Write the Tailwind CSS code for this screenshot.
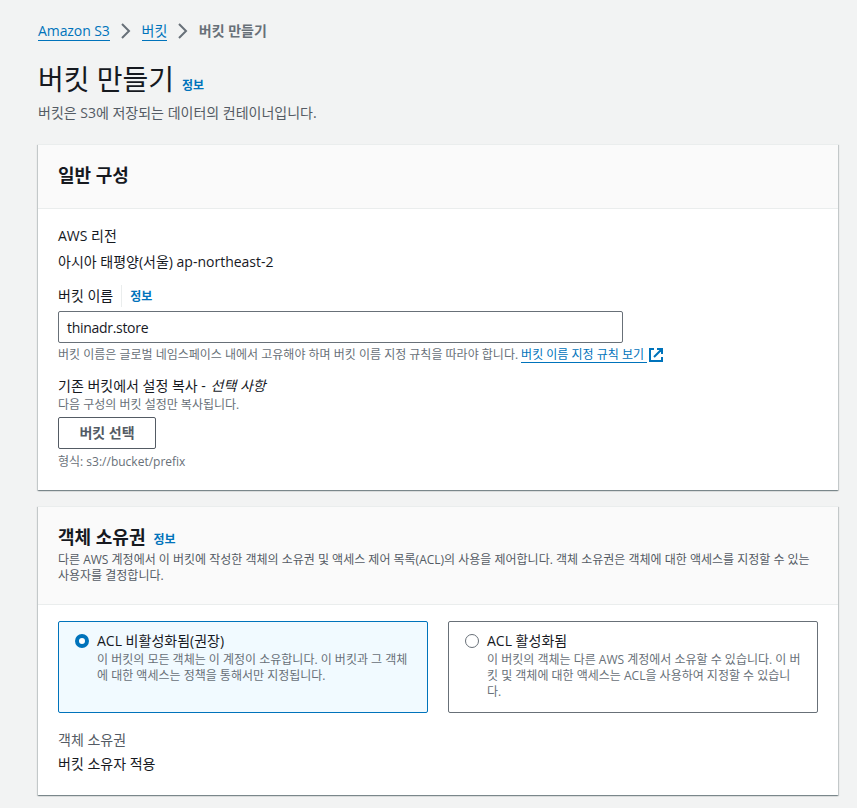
<!DOCTYPE html>
<html lang="ko">
<head>
<meta charset="utf-8">
<title>버킷 만들기</title>
<script src="https://cdn.jsdelivr.net/npm/@tailwindcss/browser@4"></script>
</head>
<body class="h-[808px] overflow-hidden bg-[#f2f3f3] pl-[38px] pt-5 font-['Open_Sans','Noto_Sans_CJK_KR',sans-serif] text-sm leading-[22px] text-[#16191f]">
<main class="w-[800px]">
  <nav class="flex h-[22px] items-start whitespace-nowrap">
    <a class="h-[21px] w-[72px] border-b border-[#0073bb] leading-[22px] tracking-[-0.08px] text-[#0073bb]">Amazon S3</a>
    <svg class="mx-[7.75px] mt-[3px] size-4 shrink-0" viewBox="0 0 16 16" fill="none" stroke="#687078" stroke-width="2"><path d="M4 1l7 7-7 7"/></svg>
    <a class="h-[21px] border-b border-[#0073bb] leading-[22px] text-[#0073bb]">버킷</a>
    <svg class="mx-[7.75px] mt-[3px] size-4 shrink-0" viewBox="0 0 16 16" fill="none" stroke="#687078" stroke-width="2"><path d="M4 1l7 7-7 7"/></svg>
    <span class="font-bold text-[#687078]">버킷 만들기</span>
  </nav>
  <header class="mt-[19px]">
    <div class="flex h-9 items-baseline whitespace-nowrap">
      <h1 class="text-[28px] leading-9">버킷 만들기</h1>
      <a class="ml-2 text-xs font-bold text-[#0073bb]">정보</a>
    </div>
    <p class="mt-[5px] text-[#545b64]">버킷은 S3에 저장되는 데이터의 컨테이너입니다.</p>
  </header>

  <section class="mt-5 h-[346px] border-t border-[#eaeded] bg-white shadow-[0_1px_1px_0_rgba(0,28,36,0.3),1px_1px_1px_0_rgba(0,28,36,0.15),-1px_1px_1px_0_rgba(0,28,36,0.15)]">
    <div class="flex h-16 items-center border-b border-[#eaeded] bg-[#fafafa] px-5 pb-[3px]">
      <h2 class="text-lg font-bold leading-[22px]">일반 구성</h2>
    </div>
    <div class="px-5 pt-4">
      <div>AWS 리전</div>
      <div class="mt-1">아시아 태평양(서울) ap-northeast-2</div>
      <div class="mt-3 flex h-[22px] items-center">
        <span>버킷 이름</span>
        <a class="ml-2 h-[22px] border-l border-[#eaeded] pl-2 text-xs font-bold leading-[24px] text-[#0073bb]">정보</a>
      </div>
      <div class="mt-1 flex h-8 w-[565px] items-center rounded-[2px] border border-[#687078] px-2 pt-0.5 tracking-[-0.3px]">thinadr.store</div>
      <div class="mt-1 flex h-4 whitespace-nowrap text-xs leading-4 text-[#687078]">
        <span>버킷 이름은 글로벌 네임스페이스 내에서 고유해야 하며 버킷 이름 지정 규칙을 따라야 합니다.</span>
        <a class="ml-[3px] h-4 border-b border-[#0073bb] pr-[3px] text-[#0073bb]">버킷 이름 지정 규칙 보기</a>
        <svg class="ml-px size-4 shrink-0" viewBox="0 0 16 16" fill="none" stroke="#0073bb" stroke-width="2"><path d="M6 2H2v12h12v-4M9 2h5v5M6 10l8-8"/></svg>
      </div>
      <div class="mt-3">기존 버킷에서 설정 복사 - <i class="ml-px">선택 사항</i></div>
      <div class="text-xs leading-4 text-[#687078]">다음 구성의 버킷 설정만 복사됩니다.</div>
      <button class="mt-1 flex h-8 w-[98px] items-center justify-center rounded-[2px] border border-[#545b64] font-bold text-[#545b64]">버킷 선택</button>
      <div class="mt-[5px] text-xs leading-4 text-[#687078]">형식: s3://bucket/prefix</div>
    </div>
  </section>

  <section class="mt-4 h-[289px] border-t border-[#eaeded] bg-white shadow-[0_1px_1px_0_rgba(0,28,36,0.3),1px_1px_1px_0_rgba(0,28,36,0.15),-1px_1px_1px_0_rgba(0,28,36,0.15)]">
    <div class="h-[98px] border-b border-[#eaeded] bg-[#fafafa] px-5 pt-[19px]">
      <div class="flex h-[26px] items-baseline">
        <h2 class="text-lg font-bold leading-[22px]">객체 소유권</h2>
        <a class="ml-2 text-xs font-bold text-[#0073bb]">정보</a>
      </div>
      <p class="whitespace-nowrap text-xs leading-4 text-[#545b64]">다른 AWS 계정에서 이 버킷에 작성한 객체의 소유권 및 액세스 제어 목록(ACL)의 사용을 제어합니다. 객체 소유권은 객체에 대한 액세스를 지정할 수 있는<br>사용자를 결정합니다.</p>
    </div>
    <div class="px-5 pt-4">
      <div class="grid grid-cols-2 gap-5">
        <div class="flex h-[92px] rounded-[2px] border border-[#0073bb] bg-[#f1faff] pl-4 pt-2">
          <svg class="mt-1 size-[14px] shrink-0" viewBox="0 0 14 14"><circle cx="7" cy="7" r="5" fill="#fff" stroke="#0073bb" stroke-width="4"/></svg>
          <div class="ml-2 whitespace-nowrap">
            <div>ACL 비활성화됨(권장)</div>
            <div class="text-xs leading-4 text-[#687078]">이 버킷의 모든 객체는 이 계정이 소유합니다. 이 버킷과 그 객체<br>에 대한 액세스는 정책을 통해서만 지정됩니다.</div>
          </div>
        </div>
        <div class="flex h-[92px] rounded-[2px] border border-[#687078] bg-white pl-4 pt-2">
          <svg class="mt-1 size-[14px] shrink-0" viewBox="0 0 14 14"><circle cx="7" cy="7" r="6.5" fill="#fff" stroke="#687078"/></svg>
          <div class="ml-2 whitespace-nowrap">
            <div>ACL 활성화됨</div>
            <div class="text-xs leading-4 text-[#687078]">이 버킷의 객체는 다른 AWS 계정에서 소유할 수 있습니다. 이 버<br>킷 및 객체에 대한 액세스는 ACL을 사용하여 지정할 수 있습니<br>다.</div>
          </div>
        </div>
      </div>
      <div class="mt-4 text-[#545b64]">객체 소유권</div>
      <div class="mt-0.5">버킷 소유자 적용</div>
    </div>
  </section>
</main>
</body>
</html>
